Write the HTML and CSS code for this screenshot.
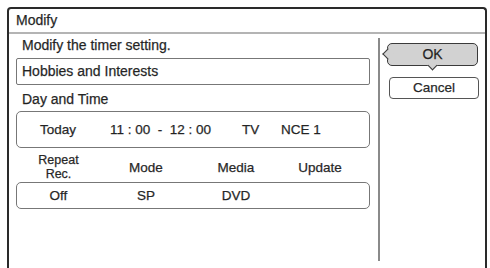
FILE: index.html
```html
<!DOCTYPE html>
<html>
<head>
<meta charset="utf-8">
<link rel="stylesheet" href="styles.css">
</head>
<body>
<div class="frame">
  <div class="titlebar">Modify</div>
  <div class="content">
    <div class="main">
      <div class="label first">Modify the timer setting.</div>
      <div class="textbox">Hobbies and Interests</div>
      <div class="label second">Day and Time</div>
      <div class="box timebox">
        <span>Today</span>
        <span>11 : 00 &nbsp;-&nbsp; 12 : 00</span>
        <span>TV</span>
        <span>NCE 1</span>
      </div>
      <div class="cols heads">
        <span class="two">Repeat<br>Rec.</span>
        <span>Mode</span>
        <span>Media</span>
        <span>Update</span>
      </div>
      <div class="box cols vals">
        <span>Off</span>
        <span>SP</span>
        <span>DVD</span>
        <span></span>
      </div>
    </div>
    <div class="divider"></div>
    <div class="side">
      <div class="btn ok">OK</div>
      <div class="btn cancel">Cancel</div>
    </div>
  </div>
</div>
</body>
</html>
```
FILE: styles.css
```css
html, body {
  margin: 0;
  padding: 0;
  background: #fff;
  height: 268px;
  overflow: hidden;
}
body {
  font-family: "Liberation Sans", Arial, sans-serif;
  font-size: 14px;
  color: #1e1e1e;
  -webkit-text-stroke: 0.25px #333;
}
.frame {
  margin: 7px 0 0 7px;
  width: 480px;
  height: 261px;
  box-sizing: border-box;
  border: 2px solid #2a2a2a;
  border-bottom: none;
  border-radius: 4px 4px 0 0;
  display: flex;
  flex-direction: column;
}
.titlebar {
  height: 23px;
  line-height: 23px;
  padding-left: 7px;
  border-bottom: 2px solid #b4b4b4;
}
.content {
  flex: 1;
  display: flex;
}
.main {
  width: 369px;
  box-sizing: border-box;
  padding-left: 7px;
  padding-right: 8px;
}
.label {
  line-height: 16px;
  padding-left: 6px;
}
.label.first { margin-top: 3px; }
.label.second { margin-top: 6px; }
.textbox {
  margin-top: 5px;
  height: 25px;
  line-height: 25px;
  border: 1px solid #777;
  border-radius: 2px;
  padding-left: 5px;
}
.box {
  border: 1px solid #777;
  border-radius: 5px;
  font-size: 13.5px;
}
.timebox {
  margin-top: 4px;
  height: 35px;
  display: grid;
  grid-template-columns: 70px 132px 39px 1fr;
  align-items: center;
  padding-left: 23px;
}
.cols {
  display: grid;
  grid-template-columns: 83px 92px 88px 80px;
  text-align: center;
  font-size: 13.5px;
}
.heads {
  padding: 3px 0 0 1px;
  height: 26px;
  align-items: center;
  margin-top: 2px;
}
.heads .two {
  font-size: 12.5px;
  line-height: 14px;
}
.vals {
  margin-top: 3px;
  height: 25px;
  line-height: 25px;
}
.divider {
  width: 2px;
  background: #8a8a8a;
  margin: 4px 0 7px 0;
}
.side {
  flex: 1;
  padding: 9px 0 0 7px;
}
.btn {
  box-sizing: border-box;
  text-align: center;
  position: relative;
}
.ok {
  width: 91px;
  height: 23px;
  line-height: 20px;
  background: #d2d2d2;
  border: 1.5px solid #3a3a3a;
  border-radius: 5px;
}
.ok::before {
  content: "";
  position: absolute;
  left: -4px;
  top: 6px;
  width: 7px;
  height: 7px;
  background: #d2d2d2;
  border-left: 1.5px solid #3a3a3a;
  border-bottom: 1.5px solid #3a3a3a;
  transform: rotate(45deg);
}
.ok::after {
  content: "";
  position: absolute;
  left: 41px;
  bottom: -4px;
  width: 6px;
  height: 6px;
  background: #d2d2d2;
  border-right: 1.5px solid #3a3a3a;
  border-bottom: 1.5px solid #3a3a3a;
  transform: rotate(45deg);
}
.cancel {
  margin: 11px 0 0 2px;
  width: 90px;
  height: 22px;
  line-height: 20px;
  background: #fff;
  border: 1px solid #555;
  border-radius: 4px;
  font-size: 13.5px;
}
```
